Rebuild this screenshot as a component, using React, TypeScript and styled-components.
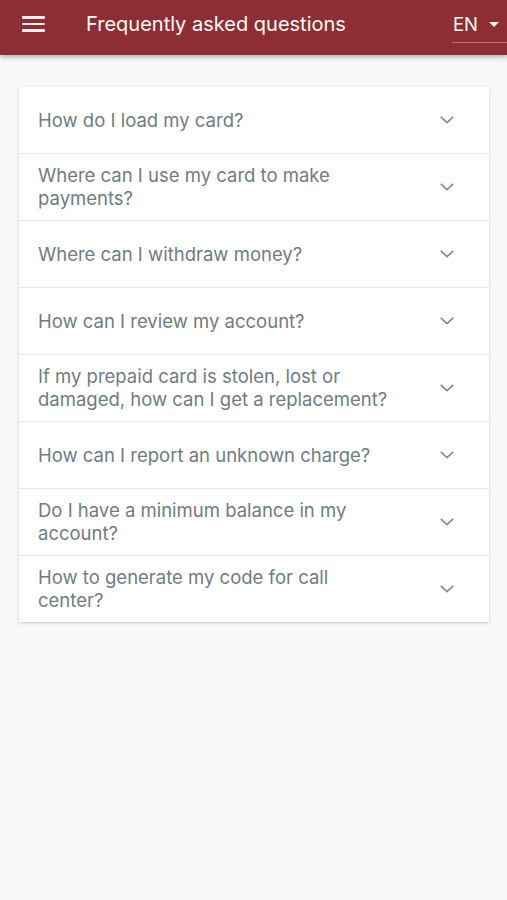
import React from 'react'
import styled, { createGlobalStyle } from 'styled-components'

const Global = createGlobalStyle`
  html, body {
    margin: 0;
    padding: 0;
    background: #f8f8f8;
    font-family: Inter, "Liberation Sans", sans-serif;
  }
`

const Page = styled.div`
  min-height: 900px;
  background: #f8f8f8;
`

const Header = styled.header`
  height: 55px;
  box-sizing: border-box;
  padding: 0 0 7px 22px;
  background-color: #8e2e33;
  box-shadow: 0 2px 5px rgba(0, 0, 0, 0.3);
  display: flex;
  align-items: center;
  color: #fff;
`

const MenuButton = styled.div`
  width: 23px;
  display: flex;
  flex-direction: column;
  gap: 4px;
  margin-right: 41px;

  span {
    height: 2.5px;
    border-radius: 1px;
    background: #fbeeee;
  }
`

const Title = styled.h1`
  flex: 1 1 auto;
  margin: 0;
  font-size: 20px;
  font-weight: 400;
`

const LangSelect = styled.div`
  width: 55px;
  height: 36px;
  margin-top: 7px;
  display: flex;
  align-items: center;
  padding: 0 0 0 1px;
  box-sizing: border-box;
  border-bottom: 1px solid rgba(255, 255, 255, 0.35);
  font-size: 18.5px;
  position: relative;
  top: -3px;

  .caret {
    margin-left: 11px;
    width: 0;
    height: 0;
    border-left: 5px solid transparent;
    border-right: 5px solid transparent;
    border-top: 5px solid #fff;
  }
`

const List = styled.div`
  margin: 32px 18px 0 19px;
  background: #e9e9e9;
  box-shadow: 0 1px 3px rgba(0, 0, 0, 0.18);
  display: flex;
  flex-direction: column;
  gap: 1px;
`

const Row = styled.div`
  height: 66px;
  background: #fff;
  display: flex;
  align-items: center;
  padding: 0 34px 0 19px;
`

const Question = styled.div`
  flex: 1 1 auto;
  color: #6e7c83;
  font-size: 18.5px;
  line-height: 23px;
  padding-right: 42px;
`

const ChevronIcon = styled.svg`
  flex: 0 0 auto;
`

const Chevron = () => (
  <ChevronIcon width="16" height="10" viewBox="0 0 16 10">
    <path d="M1.8 1.8 L8 7.6 L14.2 1.8" fill="none" stroke="#8c8c8c" strokeWidth="1.8" />
  </ChevronIcon>
)

const questions = [
  'How do I load my card?',
  'Where can I use my card to make payments?',
  'Where can I withdraw money?',
  'How can I review my account?',
  'If my prepaid card is stolen, lost or damaged, how can I get a replacement?',
  'How can I report an unknown charge?',
  'Do I have a minimum balance in my account?',
  'How to generate my code for call center?',
]

export default function App() {
  return (
    <Page>
      <Global />
      <Header>
        <MenuButton>
          <span />
          <span />
          <span />
        </MenuButton>
        <Title>Frequently asked questions</Title>
        <LangSelect>
          EN
          <span className="caret" />
        </LangSelect>
      </Header>
      <List>
        {questions.map(q => (
          <Row key={q}>
            <Question>{q}</Question>
            <Chevron />
          </Row>
        ))}
      </List>
    </Page>
  )
}
